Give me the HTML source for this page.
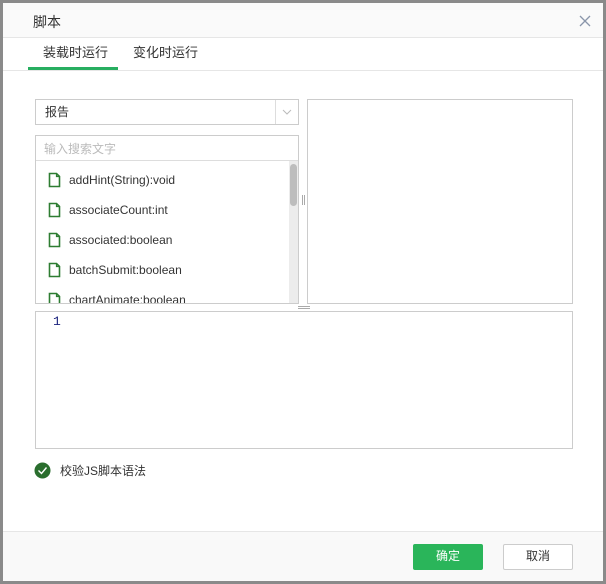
<!DOCTYPE html>
<html><head><style>
*{box-sizing:border-box;margin:0;padding:0}
body{width:606px;height:584px;background:#8a8a8a;position:relative;overflow:hidden;font-family:"Liberation Sans","Noto Sans CJK SC",sans-serif;font-size:12px;color:#333}
.dlg{position:absolute;left:3px;top:3px;width:600px;height:578px;background:#fff}
.a{position:absolute}
.hd{left:0;top:0;width:600px;height:35px;background:#fafafa;border-bottom:1px solid #e6e6e6}
.item{position:absolute;left:12px;height:30px;display:flex;align-items:center;font-size:12px;color:#333}
.item svg{margin-right:8px}
</style></head><body>
<div class="dlg">
 <div class="a hd"></div>
 <div class="a" style="left:30px;top:9px;font-size:14px;color:#333">脚本</div>
 <svg class="a" style="left:576px;top:12px" width="12" height="12"><path d="M1 1L11 11M11 1L1 11" stroke="#8a96aa" stroke-width="1.3"/></svg>
 <div class="a" style="left:0;top:67px;width:600px;height:1px;background:#e6e6e6"></div>
 <div class="a" style="left:40px;top:39px;font-size:13px;color:#333">装载时运行</div>
 <div class="a" style="left:130px;top:39px;font-size:13px;color:#333">变化时运行</div>
 <div class="a" style="left:25px;top:64px;width:90px;height:3px;background:#27ae60"></div>

 <div class="a" style="left:32px;top:96px;width:264px;height:26px;border:1px solid #ccc"></div>
 <div class="a" style="left:42px;top:100px;font-size:12px">报告</div>
 <div class="a" style="left:272px;top:97px;width:1px;height:24px;background:#ddd"></div>
 <svg class="a" style="left:279px;top:106px" width="10" height="6"><path d="M1 1L5 5L9 1" fill="none" stroke="#bbb"/></svg>

 <div class="a" style="left:32px;top:132px;width:264px;height:169px;border:1px solid #ccc;overflow:hidden">
  <div style="height:25px;border-bottom:1px solid #ddd;padding:4px 8px;color:#bbb;font-size:12px">输入搜索文字</div>
  <div class="a" style="left:253px;top:25px;width:10px;height:143px;background:#ececec"></div>
  <div class="a" style="left:254px;top:28px;width:7px;height:42px;background:#bdbdbd;border-radius:4px"></div>
  <div class="item" style="top:29px"><svg width="13" height="16"><path d="M1.5 1.5H8.5L11.5 4.5V14.5H1.5Z" fill="#fff" stroke="#2e7d32" stroke-width="1.6"/><path d="M8.5 1.5V4.5H11.5" fill="none" stroke="#2e7d32" stroke-width="1.2"/></svg>addHint(String):void</div>
  <div class="item" style="top:59px"><svg width="13" height="16"><path d="M1.5 1.5H8.5L11.5 4.5V14.5H1.5Z" fill="#fff" stroke="#2e7d32" stroke-width="1.6"/><path d="M8.5 1.5V4.5H11.5" fill="none" stroke="#2e7d32" stroke-width="1.2"/></svg>associateCount:int</div>
  <div class="item" style="top:89px"><svg width="13" height="16"><path d="M1.5 1.5H8.5L11.5 4.5V14.5H1.5Z" fill="#fff" stroke="#2e7d32" stroke-width="1.6"/><path d="M8.5 1.5V4.5H11.5" fill="none" stroke="#2e7d32" stroke-width="1.2"/></svg>associated:boolean</div>
  <div class="item" style="top:119px"><svg width="13" height="16"><path d="M1.5 1.5H8.5L11.5 4.5V14.5H1.5Z" fill="#fff" stroke="#2e7d32" stroke-width="1.6"/><path d="M8.5 1.5V4.5H11.5" fill="none" stroke="#2e7d32" stroke-width="1.2"/></svg>batchSubmit:boolean</div>
  <div class="item" style="top:149px"><svg width="13" height="16"><path d="M1.5 1.5H8.5L11.5 4.5V14.5H1.5Z" fill="#fff" stroke="#2e7d32" stroke-width="1.6"/><path d="M8.5 1.5V4.5H11.5" fill="none" stroke="#2e7d32" stroke-width="1.2"/></svg>chartAnimate:boolean</div>
 </div>
 <div class="a" style="left:299px;top:192px;width:1px;height:10px;background:#aaa"></div>
 <div class="a" style="left:301px;top:192px;width:1px;height:10px;background:#aaa"></div>
 <div class="a" style="left:304px;top:96px;width:266px;height:205px;border:1px solid #ccc"></div>
 <div class="a" style="left:295px;top:303px;width:12px;height:1px;background:#aaa"></div>
 <div class="a" style="left:295px;top:305px;width:12px;height:1px;background:#aaa"></div>
 <div class="a" style="left:32px;top:308px;width:538px;height:138px;border:1px solid #ccc"></div>
 <div class="a" style="left:50px;top:311px;font-size:13px;color:#1a237e;font-family:'Liberation Mono',monospace">1</div>

 <svg class="a" style="left:31px;top:459px" width="17" height="17"><circle cx="8.5" cy="8.5" r="8" fill="#2a6e2e"/><path d="M4.5 8.5L7.5 11.5L12.5 5.5" fill="none" stroke="#fff" stroke-width="1.4"/></svg>
 <div class="a" style="left:57px;top:459px;font-size:12px">校验JS脚本语法</div>

 <div class="a" style="left:0;top:528px;width:600px;height:50px;background:#f9f9f9;border-top:1px solid #e6e6e6"></div>
 <div class="a" style="left:410px;top:541px;width:70px;height:26px;background:#2ab55a;border-radius:2px;color:#fff;text-align:center;line-height:24px">确定</div>
 <div class="a" style="left:500px;top:541px;width:70px;height:26px;background:#fff;border:1px solid #ccc;border-radius:2px;text-align:center;line-height:22px">取消</div>
</div>
</body></html>
